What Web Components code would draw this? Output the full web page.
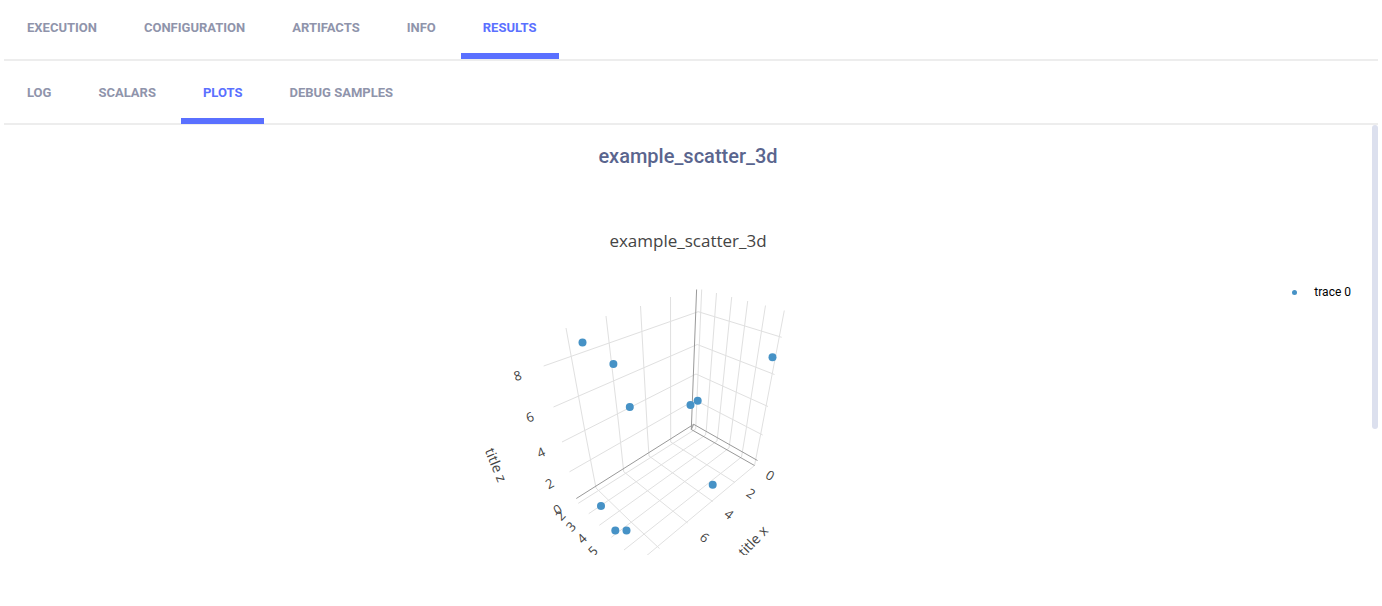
<!DOCTYPE html>
<html lang="en">
<head>
<meta charset="utf-8">
<title>Experiment results</title>
<style>
  body { margin: 0; background: #fff; font-family: Roboto, "Liberation Sans", sans-serif; }
</style>
</head>
<body>
<results-page></results-page>
<script>
class TabBar extends HTMLElement {
  constructor() {
    super();
    this.attachShadow({ mode: "open" }).innerHTML = `
      <style>
        :host { display: block; height: var(--bar-height, 59px); margin: 0 4px; border-bottom: 2px solid #ededed; }
        nav { display: flex; gap: 3px; height: var(--tab-height, 59px); padding-left: 1px; }
      </style>
      <nav><slot></slot></nav>`;
  }
}
class TabItem extends HTMLElement {
  constructor() {
    super();
    this.attachShadow({ mode: "open" }).innerHTML = `
      <style>
        :host { display: flex; }
        a { box-sizing: border-box; display: flex; align-items: center; padding: var(--tab-top, 2px) 22px 0; border-bottom: 6px solid transparent;
            font-size: 13px; line-height: 16px; font-weight: 700; color: #8f94ab; text-decoration: none; white-space: nowrap; }
        :host([selected]) a { color: #5a70ff; border-bottom-color: #5a70ff; }
      </style>
      <a href="#"><slot></slot></a>`;
  }
}
class PlotLegend extends HTMLElement {
  constructor() {
    super();
    this.attachShadow({ mode: "open" }).innerHTML = `
      <style>
        :host { display: flex; align-items: center; gap: 17px; font-size: 12px; line-height: 16px; color: #000; }
        i { width: 5px; height: 5px; border-radius: 50%; background: #4692c6; }
      </style>
      <i></i><span><slot></slot></span>`;
  }
}
class ScatterPlot extends HTMLElement {
  constructor() {
    super();
    const grid = [
      "543.7,366 698.2,311.7 781.7,337.3", "553.5,407 697.3,344.5 774.5,374.5",
      "562,442 696,374 768,406.5", "569.5,471.8 695,400 762.7,435",
      "566,328 584.7,430 596,488 630,521 659.5,548.5", "606,316 618.5,423 623.7,471.7 687.7,523",
      "640.5,306 647.3,430 649,456 712.7,501.5", "670.5,297 670.7,442 735,482.5",
      "701.7,289.5 695.7,429 578.3,503.3", "716.5,293 706.3,430 705.5,435 588.7,513.7",
      "731.7,297 718.3,430 717,441 599.3,525.3", "747.7,301 731.5,430 729,448 611.3,537.3",
      "765.5,305.5 746,430 741.5,457 624,550", "784.3,310.5 761.5,430 754.5,465.5 645,557"];
    const axes = ["576.3,498.5 693.7,424.3 757.5,460.5", "696.6,289.5 691.3,429.5 754.5,465.5", "691.3,429.5 693.7,424.3"];
    const points = [[582.5,342.4],[613.4,363.9],[629.8,407],[690.5,405],[697.7,400.7],[772.5,357.3],[601,505.9],[615.3,530.5],[626.5,530.5],[712.7,484.7]];
    const labels = [["8",517.5,375.6,-18],["6",530,417,-20],["4",541,452.5,-24],["2",549.5,483.5,-28],["0",557.5,509.5,-31],
      ["2",560.5,515.5,-46],["3",571,526.5,-46],["4",582,538.5,-44],["5",593,551,-42],
      ["0",770,475.5,31],["2",751,493.5,34],["4",729,514.3,37],["6",704.5,537.5,40],["8",545.5,559,0]];
    const titles = [["title z",496,465,68],["title x",753,541,-46]];
    const text = (size) => ([t, x, y, r]) =>
      `<text font-size="${size}" text-anchor="middle" dy=".36em" transform="translate(${x} ${y}) rotate(${r})">${t}</text>`;
    const lines = (set) => set.map(p => `<polyline points="${p}"/>`).join("");
    this.attachShadow({ mode: "open" }).innerHTML = `
      <style>
        :host { display: block; }
        svg { display: block; width: 330px; height: 275px; overflow: hidden; font-family: "Open Sans", sans-serif; }
        polyline { fill: none; }
      </style>
      <svg viewBox="480 280 330 275" role="img" aria-label="3D scatter plot">
        <g stroke="#e0e0e0">${lines(grid)}</g>
        <g stroke="#999">${lines(axes)}</g>
        <g fill="#444">${labels.map(text(13)).join("")}${titles.map(text(14)).join("")}</g>
        <g fill="#4692c6">${points.map(([x, y]) => `<circle cx="${x}" cy="${y}" r="4"/>`).join("")}</g>
      </svg>`;
  }
}
class ResultsPage extends HTMLElement {
  constructor() {
    super();
    this.attachShadow({ mode: "open" }).innerHTML = `
      <style>
        :host { display: block; }
        .sub { --bar-height: 62px; --tab-height: 63px; --tab-top: 6px; }
        main { display: grid; grid-template-columns: 1fr auto 1fr; margin-right: 4px; }
        .middle { grid-column: 2; display: flex; flex-direction: column; align-items: center; padding-right: 2px; }
        h1 { margin: 19px 0 0; font-size: 20px; line-height: 24px; font-weight: 500; color: #5a658e; }
        h2 { margin: 61px 0 0; font: 400 17px/24px "Open Sans", sans-serif; color: #444; }
        scatter-plot { margin: 27px 0 0; padding-right: 86px; }
        .side { grid-column: 3; display: flex; justify-content: flex-end; align-items: flex-start; gap: 21px; }
        plot-legend { margin-top: 159px; }
        .thumb { width: 6px; height: 304px; border-radius: 3px; background: #dce0ee; }
      </style>
      <tab-bar>
        <tab-item>EXECUTION</tab-item><tab-item>CONFIGURATION</tab-item><tab-item>ARTIFACTS</tab-item>
        <tab-item>INFO</tab-item><tab-item selected>RESULTS</tab-item>
      </tab-bar>
      <tab-bar class="sub">
        <tab-item>LOG</tab-item><tab-item>SCALARS</tab-item><tab-item selected>PLOTS</tab-item><tab-item>DEBUG SAMPLES</tab-item>
      </tab-bar>
      <main>
        <div class="middle">
          <h1>example_scatter_3d</h1>
          <h2>example_scatter_3d</h2>
          <scatter-plot></scatter-plot>
        </div>
        <div class="side">
          <plot-legend>trace 0</plot-legend>
          <div class="thumb"></div>
        </div>
      </main>`;
  }
}
customElements.define("tab-bar", TabBar);
customElements.define("tab-item", TabItem);
customElements.define("plot-legend", PlotLegend);
customElements.define("scatter-plot", ScatterPlot);
customElements.define("results-page", ResultsPage);
</script>
</body>
</html>
